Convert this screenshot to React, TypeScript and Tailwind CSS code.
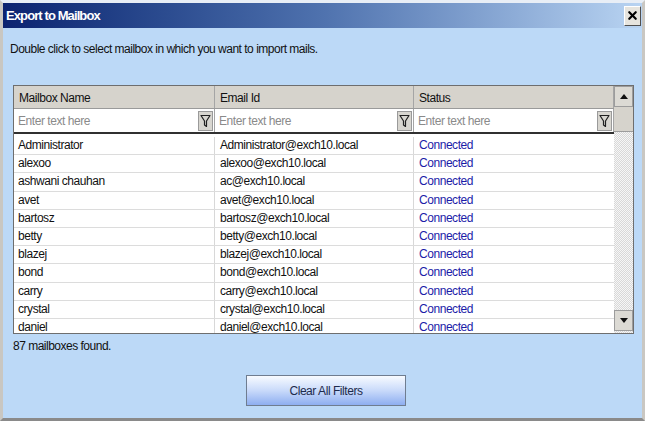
import { X } from 'lucide-react'

const rows = [
  ['Administrator', 'Administrator@exch10.local'],
  ['alexoo', 'alexoo@exch10.local'],
  ['ashwani chauhan', 'ac@exch10.local'],
  ['avet', 'avet@exch10.local'],
  ['bartosz', 'bartosz@exch10.local'],
  ['betty', 'betty@exch10.local'],
  ['blazej', 'blazej@exch10.local'],
  ['bond', 'bond@exch10.local'],
  ['carry', 'carry@exch10.local'],
  ['crystal', 'crystal@exch10.local'],
  ['daniel', 'daniel@exch10.local'],
]

const cols = ['Mailbox Name', 'Email Id', 'Status']

// little funnel button at the right edge of each filter cell
function FilterButton() {
  return (
    <div className="flex h-[20px] w-[15px] items-center justify-center border border-[#9a9a9a] bg-[#d8d6d0]">
      <svg width="11" height="14" viewBox="0 0 11 14" fill="none">
        <path d="M1 1.5h9L6.5 7v5.5L4.5 11V7z" stroke="#202020" strokeWidth="1.2" strokeLinejoin="round" />
      </svg>
    </div>
  )
}

function ScrollArrow({ up }: { up?: boolean }) {
  return (
    <div className="flex h-[21px] w-full items-center justify-center border border-[#9c9c9c] bg-[#dcdad4]">
      <svg width="8" height="5" viewBox="0 0 8 5">
        <path d={up ? 'M0 5L4 0L8 5z' : 'M0 0L4 5L8 0z'} fill="#101010" />
      </svg>
    </div>
  )
}

export default function App() {
  return (
    <div
      className="flex h-[421px] w-[645px] flex-col border-x-[3px] border-b-[3px] border-t-[3px] border-x-[#c9c7c2] border-b-[#8a8a8a] border-t-[#e8eef6] bg-[#bcd9f7] text-[#111]"
      style={{ fontFamily: '"Liberation Sans", Arial, sans-serif' }}
    >
      {/* title bar */}
      <div className="flex h-[25px] shrink-0 items-center justify-between bg-gradient-to-r from-[#0c2370] via-[#4f72ae] to-[#b9d4f2] pl-[3px] pr-[1px]">
        <span className="text-[13px] font-bold tracking-[-0.9px] text-white">Export to Mailbox</span>
        <div className="flex h-[20px] w-[17px] items-center justify-center border border-b-[#505050] border-l-white border-r-[#505050] border-t-white bg-[#e6e4de]">
          <X className="h-[13px] w-[13px]" strokeWidth={4} color="#000" />
        </div>
      </div>

      <div className="flex flex-1 flex-col px-[7px]">
        <p className="mt-[13px] text-[12px] leading-[16px] tracking-[-0.5px]">
          Double click to select mailbox in which you want to import mails.
        </p>

        {/* grid */}
        <div className="ml-[3px] mt-[28px] flex h-[249px] w-[621px] border border-[#6e6e6e] bg-white">
          <div className="flex flex-1 flex-col overflow-hidden">
            <div className="grid h-[23px] shrink-0 grid-cols-[201px_199px_200px] border-b border-[#9a9a9a] bg-[#d6d3cc]">
              {cols.map((c) => (
                <div key={c} className="flex items-center border-r border-[#a5a5a5] pl-[5px] pt-[1px] text-[12px] tracking-[-0.45px]">
                  {c}
                </div>
              ))}
            </div>
            <div className="grid h-[25px] shrink-0 grid-cols-[201px_199px_200px] border-b-2 border-[#303030]">
              {cols.map((c) => (
                <div key={c} className="flex items-center justify-between border-r border-[#a5a5a5] pl-[4px] pr-[1px]">
                  <span className="text-[12px] tracking-[-0.45px] text-[#8a8a8a]">Enter text here</span>
                  <FilterButton />
                </div>
              ))}
            </div>
            <div className="flex flex-col pt-[3px]">
              {rows.map(([name, email]) => (
                <div
                  key={name}
                  className="grid h-[18.2px] shrink-0 grid-cols-[201px_199px_200px] border-b border-[#dcdcdc] text-[12px] leading-[17px] tracking-[-0.45px]"
                >
                  <div className="border-r border-[#d8d8d8] pl-[4px]">{name}</div>
                  <div className="border-r border-[#d8d8d8] pl-[5px]">{email}</div>
                  <div className="pl-[5px] text-[#1c1ca8]">Connected</div>
                </div>
              ))}
            </div>
          </div>

          {/* scrollbar */}
          <div className="flex w-[19px] shrink-0 flex-col bg-[repeating-conic-gradient(#d8d8d8_0%_25%,#f6f6f6_0%_50%)] bg-[length:2px_2px]">
            <ScrollArrow up />
            <div className="h-[25px] border-b border-[#9c9c9c] bg-[#d6d3cc]" />
            <div className="flex-1" />
            <div className="mb-[2px]">
              <ScrollArrow />
            </div>
          </div>
        </div>

        <p className="mt-[4px] pl-[3px] text-[12px] leading-[16px] tracking-[-0.5px]">87 mailboxes found.</p>

        <div className="mt-[21px] flex justify-center pl-[7px]">
          <button className="h-[31px] w-[160px] border border-[#6f7d90] bg-gradient-to-b from-[#f8fbff] via-[#c9dafa] to-[#8eaef0] text-[12px] tracking-[-0.45px] text-[#1e2b4c]">
            Clear All Filters
          </button>
        </div>
      </div>
    </div>
  )
}
